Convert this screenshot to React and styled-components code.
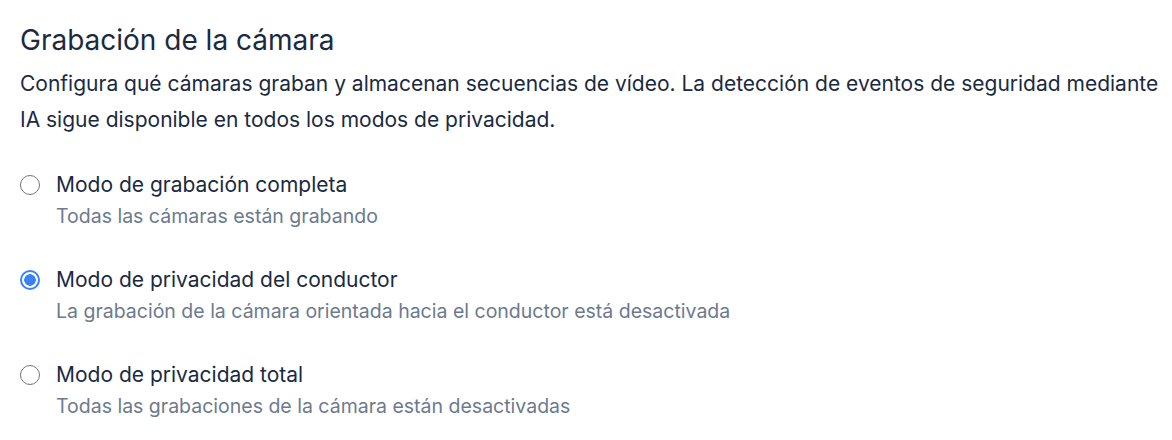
import styled, { createGlobalStyle } from "styled-components";

const GlobalStyle = createGlobalStyle`
  body {
    margin: 0;
    background: #ffffff;
    font-family: Inter, "Noto Sans", sans-serif;
    color: #1b2a41;
  }
`;

const options = [
  {
    id: "full",
    label: "Modo de grabación completa",
    hint: "Todas las cámaras están grabando",
  },
  {
    id: "driver",
    label: "Modo de privacidad del conductor",
    hint: "La grabación de la cámara orientada hacia el conductor está desactivada",
  },
  {
    id: "total",
    label: "Modo de privacidad total",
    hint: "Todas las grabaciones de la cámara están desactivadas",
  },
];

export default function App() {
  const selected = "driver";

  return (
    <>
      <GlobalStyle />
      <Section>
        <Title>Grabación de la cámara</Title>
        <Description>
          Configura qué cámaras graban y almacenan secuencias de vídeo. La detección de eventos de
          seguridad mediante IA sigue disponible en todos los modos de privacidad.
        </Description>
        <OptionList>
          {options.map((opt) => (
            <Option key={opt.id}>
              <Radio $checked={opt.id === selected} />
              <OptionText>
                <OptionLabel>{opt.label}</OptionLabel>
                <OptionHint>{opt.hint}</OptionHint>
              </OptionText>
            </Option>
          ))}
        </OptionList>
      </Section>
    </>
  );
}

const Section = styled.section`
  padding: 22px 0 0 20px;
`;

const Title = styled.h2`
  margin: 0;
  font-size: 28px;
  font-weight: 400;
  line-height: 36px;
  color: #1b2a41;
`;

const Description = styled.p`
  margin: 8px 0 0 0;
  font-size: 21px;
  line-height: 36px;
  color: #1b2a41;
`;

const OptionList = styled.div`
  display: flex;
  flex-direction: column;
  gap: 33px;
  margin-top: 32px;
`;

const Option = styled.label`
  display: flex;
  align-items: flex-start;
  gap: 16px;
  cursor: pointer;
`;

const Radio = styled.span`
  flex: none;
  width: 20px;
  height: 20px;
  margin-top: 5px;
  box-sizing: border-box;
  border-radius: 50%;
  border: ${(p) => (p.$checked ? "2px solid #3b82f6" : "1.5px solid #767676")};
  background: ${(p) =>
    p.$checked ? "radial-gradient(circle, #3b82f6 0 5.5px, #ffffff 6px)" : "#ffffff"};
`;

const OptionText = styled.div`
  display: flex;
  flex-direction: column;
  gap: 1px;
`;

const OptionLabel = styled.span`
  font-size: 21px;
  line-height: 30px;
  color: #1b2a41;
`;

const OptionHint = styled.span`
  font-size: 19.5px;
  line-height: 31px;
  color: #6b7a8f;
`;
